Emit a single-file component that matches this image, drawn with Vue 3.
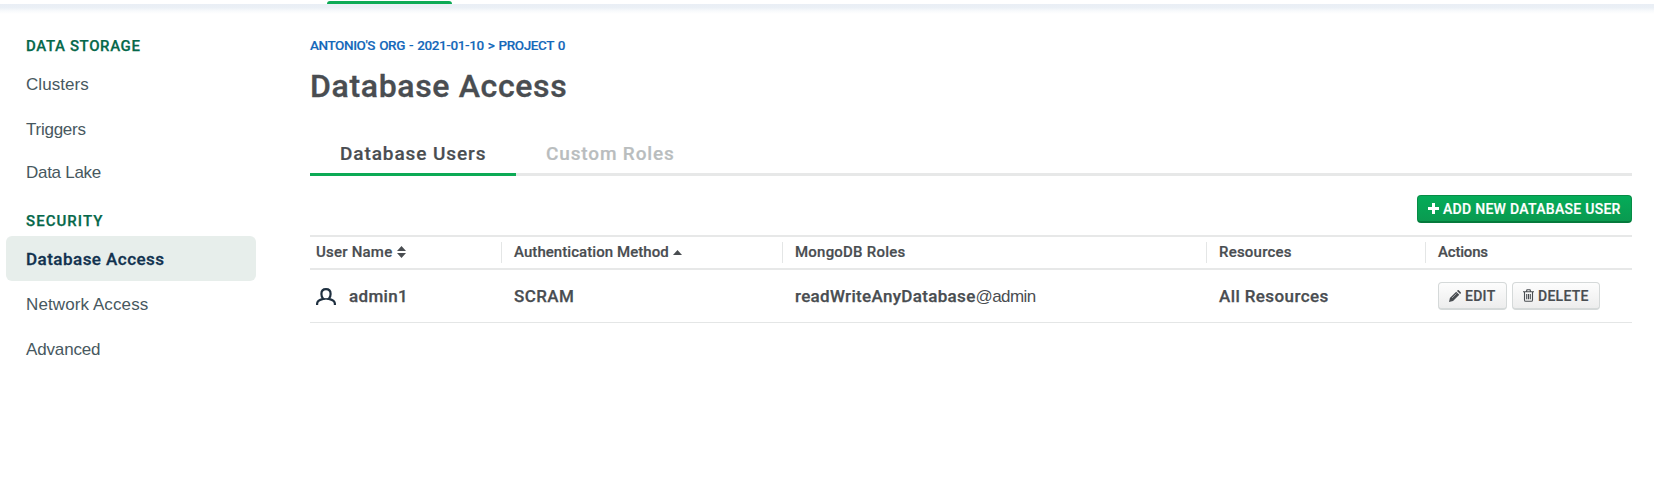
<script setup>
const storage = [
  { label: 'Clusters', cls: 'clusters' },
  { label: 'Triggers', cls: 'triggers' },
  { label: 'Data Lake', cls: 'lake' },
]
const security = [
  { label: 'Database Access', cls: 'active' },
  { label: 'Network Access', cls: 'network' },
  { label: 'Advanced', cls: 'advanced' },
]
</script>

<template>
  <div class="page">
    <header class="topbar"><span class="top-active"></span></header>
    <div class="shade"></div>
    <div class="body">
      <nav class="side">
        <h2 class="group">DATA STORAGE</h2>
        <a v-for="i in storage" :key="i.label" class="item" :class="i.cls">{{ i.label }}</a>
        <h2 class="group security">SECURITY</h2>
        <a v-for="i in security" :key="i.label" class="item" :class="i.cls">{{ i.label }}</a>
      </nav>
      <main class="main">
        <div class="crumbs">ANTONIO'S ORG - 2021-01-10 &gt; PROJECT 0</div>
        <h1 class="title">Database Access</h1>
        <div class="tabs">
          <a class="tab on">Database Users</a>
          <a class="tab roles">Custom Roles</a>
        </div>
        <div class="toolbar">
          <button class="btn add">
            <svg width="11" height="11" viewBox="0 0 11 11"><path d="M4 0h3v4h4v3H7v4H4V7H0V4h4z" fill="#fff" /></svg>
            <span>ADD NEW DATABASE USER</span>
          </button>
        </div>
        <div class="row head">
          <div class="cell"><span class="t-user">User Name</span>
            <svg class="sort" width="9" height="12" viewBox="0 0 9 12"><path d="M4.500 0L9 5H0zM0 7h9L4.500 12z" fill="#494d51" /></svg>
          </div>
          <div class="cell"><span class="t-auth">Authentication Method</span>
            <svg class="caret" width="9" height="5" viewBox="0 0 9 5"><path d="M4.500 0L9 5H0z" fill="#494d51" /></svg>
          </div>
          <div class="cell"><span>MongoDB Roles</span></div>
          <div class="cell"><span class="t-res">Resources</span></div>
          <div class="cell"><span class="t-act">Actions</span></div>
        </div>
        <div class="row data">
          <div class="cell user">
            <svg width="20" height="17" viewBox="0 0 20 17" fill="none" stroke="#1f3040" stroke-width="2.200">
              <path d="M1.100 17v-1.200c0-2.700 2.300-4.200 6.100-5C6 9.700 5.400 7.900 5.400 5.900c0-2.900 1.700-4.700 4.600-4.700s4.600 1.800 4.600 4.700c0 2-.6 3.800-1.800 4.900 3.800.8 6.100 2.300 6.100 5V17" />
              <path d="M7 10.900h6" stroke-width="1.500" />
            </svg>
            <span class="t-admin">admin1</span>
          </div>
          <div class="cell"><span class="t-scram">SCRAM</span></div>
          <div class="cell"><span>readWriteAnyDatabase</span><span class="at">@admin</span></div>
          <div class="cell"><span class="t-all">All Resources</span></div>
          <div class="cell acts">
            <button class="btn edit">
              <svg width="12" height="12" viewBox="0 0 12 12"><path d="M0 12l.9-4L7.200 1.700l3.100 3.100L4 11.100zM8 .9L8.600.3q.6-.6 1.200 0l1.900 1.900q.6.6 0 1.200l-.6.6z" fill="#494d51" /><path d="M3 8L7.500 3.500" stroke="#d8d9da" stroke-width=".6" /></svg>
              <span>EDIT</span>
            </button>
            <button class="btn delete">
              <svg width="11" height="13" viewBox="0 0 11 13" fill="none" stroke="#494d51" stroke-width="1.100"><path d="M0 2.800h11M3.300 2.800L4 .8h3l.7 2M1.500 2.800v8.100q0 1.400 1.200 1.400h5.600q1.200 0 1.200-1.400V2.800M3.700 5v5.300M5.500 5v5.300M7.300 5v5.300" /></svg>
              <span>DELETE</span>
            </button>
          </div>
        </div>
      </main>
    </div>
  </div>
</template>

<style>
body { background: #fff; }
</style>

<style scoped>
.page { height: 486px; overflow: hidden; font-family: Roboto, "Liberation Sans", sans-serif; color: #494d51; }
.page * { box-sizing: border-box; }
.topbar { height: 4px; display: flex; padding: 1px 0 0 327px; }
.top-active { width: 125px; height: 3px; border-radius: 3px 3px 0 0; background: #0caa55; }
.shade { height: 10px; background: linear-gradient(#e9eef5 0, #ebf0f6 35%, #f8fafc 70%, #fff 100%); }
.body { display: flex; }
.side { width: 310px; padding: 20px 54px 0 6px; display: flex; flex-direction: column; }
.group { margin: 0; padding-left: 20px; height: 27px; font-size: 15px; font-weight: 500; line-height: 24px; letter-spacing: .62px; color: #06684a; -webkit-text-stroke: .25px; }
.group.security { margin-top: 15px; letter-spacing: 1.050px; }
.item { display: block; height: 45px; padding-left: 20px; border-radius: 6px; font: 17px/47px "Liberation Sans", Arial, sans-serif; color: #475860; }
.clusters { letter-spacing: .05px; }
.triggers { height: 43px; letter-spacing: -.25px; }
.lake { letter-spacing: -.28px; }
.item.active { background: #e7eeeb; color: #12324f; font-family: Roboto, sans-serif; font-weight: 500; letter-spacing: .47px; -webkit-text-stroke: .3px; }
.network { letter-spacing: .1px; }
.advanced { letter-spacing: -.15px; }
.main { width: 1322px; padding-top: 20px; display: flex; flex-direction: column; }
.crumbs { height: 24px; line-height: 23px; font-size: 13.500px; font-weight: 500; letter-spacing: -.42px; word-spacing: 1.200px; color: #1468ba; -webkit-text-stroke: .15px; }
.title { margin: 6px 0 0; height: 48px; line-height: 45px; font-size: 32px; font-weight: 500; letter-spacing: .65px; -webkit-text-stroke: .35px; }
.tabs { display: flex; height: 64px; border-bottom: 3px solid #e7e8e8; }
.tab { height: 64px; line-height: 84px; padding-left: 30px; font-size: 19px; font-weight: 500; letter-spacing: .91px; -webkit-text-stroke: .2px; }
.tab.on { width: 206px; border-bottom: 3px solid #0caa55; }
.tab.roles { letter-spacing: .85px; color: #b9bdbe; }
.toolbar { display: flex; justify-content: flex-end; padding-top: 19px; height: 59px; }
.btn { display: flex; align-items: center; gap: 4px; height: 28px; margin: 0; padding: 0 0 0 10px; font: 500 14px/26px Roboto, sans-serif; letter-spacing: .27px; color: #494d51; border: 1px solid #d5d9d9; border-bottom-width: 2px; border-radius: 4px; background: linear-gradient(#fdfdfd, #ededed); white-space: nowrap; -webkit-text-stroke: .2px; }
.btn svg { flex: none; }
.add { width: 215px; letter-spacing: .29px; color: #fff; background: linear-gradient(#04ac59, #0a9a50); border-color: #078c46 #078c46 #057a3c; }
.row { display: grid; grid-template-columns: 191px 281px 424px 219px 207px; }
.head { height: 35px; border-top: 2px solid #e7e8e8; border-bottom: 2px solid #e7e8e8; padding: 5px 0; font-size: 15px; font-weight: 500; letter-spacing: .22px; -webkit-text-stroke: .2px; }
.head .cell { display: flex; align-items: center; padding-left: 12px; line-height: 19px; height: 21px; }
.head .cell + .cell { border-left: 1px solid #e4e6e6; }
.head .cell:first-child { padding-left: 6px; }
.t-auth { letter-spacing: .06px; }
.t-act { letter-spacing: -.19px; }
.sort { margin-left: 5px; margin-bottom: 1px; }
.caret { margin: 0 0 1px 4px; }
.data { height: 53px; border-bottom: 1px solid #e4e6e6; font-size: 17px; font-weight: 500; letter-spacing: .32px; -webkit-text-stroke: .25px; }
.data .cell { display: flex; align-items: center; padding-left: 13px; height: 52px; }
.data .user { padding-left: 6px; gap: 13px; }
.t-scram, .t-all { letter-spacing: .4px; }
.at { padding-top: 2px; font-family: "Liberation Sans", Arial, sans-serif; font-weight: 400; letter-spacing: -.6px; -webkit-text-stroke: 0; }
.acts { gap: 5px; }
.edit { width: 69px; }
.delete { width: 88px; }
</style>
